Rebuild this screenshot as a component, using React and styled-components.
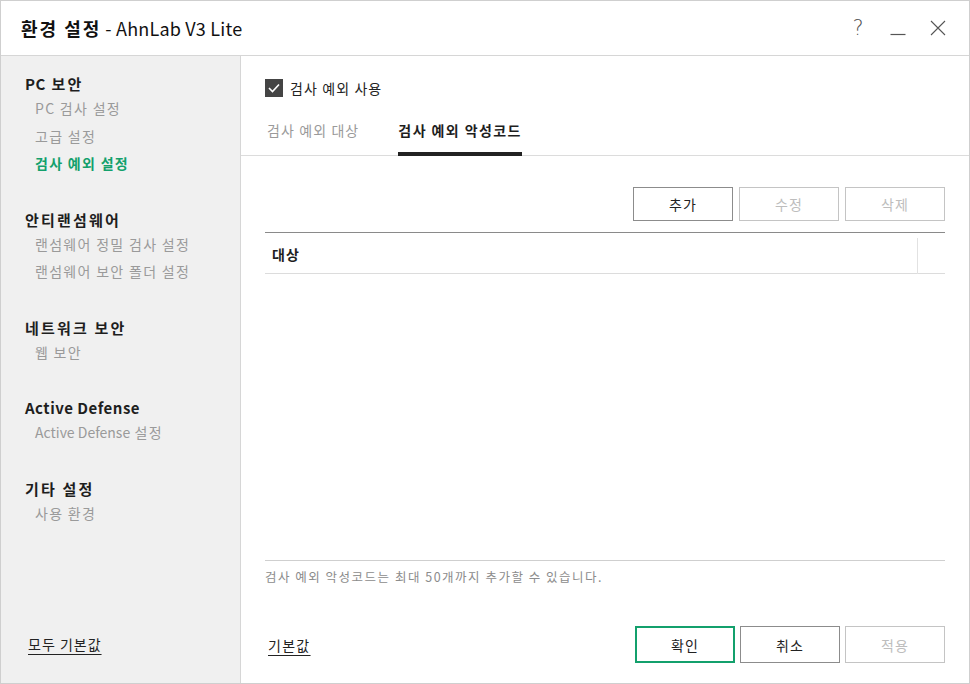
import React from "react";
import styled, { createGlobalStyle } from "styled-components";

const Global = createGlobalStyle`
  html, body { margin: 0; padding: 0; background: #fff; }
  * { box-sizing: border-box; }
  body { font-family: "Noto Sans CJK KR", "Noto Sans", sans-serif; color: #222; }
`;

const Window = styled.div`
  width: 970px;
  height: 684px;
  border: 1px solid #cfcfcf;
  display: flex;
  flex-direction: column;
  background: #fff;
`;

const TitleBar = styled.div`
  height: 55px;
  flex-shrink: 0;
  border-bottom: 1px solid #d6d6d6;
  display: flex;
  align-items: center;
  padding: 0 20px 0 20px;
`;

const Title = styled.div`
  font-size: 18px;
  line-height: 24px;
  color: #111;
  flex: 1;
  letter-spacing: 0.2px;
  b { font-weight: 700; letter-spacing: 2px; margin-right: 4px; }
`;

const WinButtons = styled.div`
  display: flex;
  align-items: center;
  gap: 22px;
  margin-right: 2px;
`;

const WinBtn = styled.span`
  width: 18px;
  height: 22px;
  display: flex;
  align-items: center;
  justify-content: center;
  color: #555;
  font-size: 21px;
  font-family: "DejaVu Sans", sans-serif;
  font-weight: 300;
`;

const Body = styled.div`
  flex: 1;
  display: flex;
  min-height: 0;
`;

const Sidebar = styled.div`
  width: 240px;
  flex-shrink: 0;
  background: #f0f0f0;
  border-right: 1px solid #d6d6d6;
  display: flex;
  flex-direction: column;
  padding: 17px 0 29px 24px;
`;

const Group = styled.div`
  display: flex;
  flex-direction: column;
  & + & { margin-top: 31px; }
`;

const GroupTitle = styled.div`
  font-size: 15px;
  font-weight: 700;
  line-height: 22px;
  color: #1e1e1e;
  letter-spacing: 2.2px;
`;

const NavItem = styled.div`
  font-size: 14px;
  line-height: 27.5px;
  padding-left: 10px;
  letter-spacing: 1.3px;
  color: ${(p) => (p.$active ? "#13a06c" : "#9a9a9a")};
  font-weight: ${(p) => (p.$active ? 700 : 400)};
`;

/* Latin words are already about as wide as the reference's */
const Lat = styled.span`
  letter-spacing: ${(p) => (p.$bold ? "0.5px" : "0")};
`;

const ResetAll = styled.span`
  margin-top: auto;
  margin-left: 3px;
  font-size: 14px;
  line-height: 20px;
  letter-spacing: 1px;
  color: #222;
  text-decoration: underline;
  text-underline-offset: 4px;
`;

const Main = styled.div`
  flex: 1;
  display: flex;
  flex-direction: column;
  padding-top: 23px;
`;

const CheckRow = styled.label`
  display: flex;
  align-items: center;
  gap: 7px;
  padding-left: 24px;
  height: 18px;
  font-size: 14px;
  letter-spacing: 1.1px;
  color: #222;
`;

const CheckBox = styled.span`
  width: 18px;
  height: 18px;
  background: #444;
  display: flex;
  align-items: center;
  justify-content: center;
`;

const Tabs = styled.div`
  margin-top: 23px;
  display: flex;
  gap: 39px;
  padding-left: 26px;
  border-bottom: 1px solid #dcdcdc;
`;

const Tab = styled.div`
  font-size: 14px;
  line-height: 20px;
  padding-bottom: 12px;
  margin-bottom: -1px;
  border-bottom: 4px solid ${(p) => (p.$active ? "#222" : "transparent")};
  color: ${(p) => (p.$active ? "#1e1e1e" : "#9a9a9a")};
  font-weight: ${(p) => (p.$active ? 700 : 400)};
  letter-spacing: ${(p) => (p.$active ? "1.4px" : "1.1px")};
`;

const Panel = styled.div`
  flex: 1;
  display: flex;
  flex-direction: column;
  padding: 31px 24px 20px 24px;
  min-height: 0;
`;

const Toolbar = styled.div`
  display: flex;
  justify-content: flex-end;
  gap: 6px;
`;

const Button = styled.button`
  width: 100px;
  height: ${(p) => (p.$tall ? "37px" : "34px")};
  background: #fff;
  font-family: inherit;
  font-size: 14px;
  letter-spacing: 1px;
  padding: 0;
  cursor: default;
  border: ${(p) =>
    p.$primary ? "2px solid #13a06c" : p.disabled ? "1px solid #c4c4c4" : "1px solid #8c8c8c"};
  color: ${(p) => (p.disabled ? "#bdbdbd" : "#222")};
`;

const Table = styled.div`
  margin-top: 11px;
  flex: 1;
  border-top: 1px solid #8a8a8a;
  border-bottom: 1px solid #cfcfcf;
  display: flex;
  flex-direction: column;
`;

const HeadRow = styled.div`
  height: 41px;
  display: grid;
  grid-template-columns: 1fr 28px;
  align-items: center;
  border-bottom: 1px solid #dcdcdc;
`;

const HeadCell = styled.div`
  height: 100%;
  display: flex;
  align-items: center;
  padding-left: 7px;
  font-size: 14px;
  font-weight: 700;
  letter-spacing: 1px;
  color: #1e1e1e;
  & + & {
    border-left: 1px solid #e2e2e2;
    height: 36px;
    margin-top: 5px;
    align-self: start;
  }
`;

const Note = styled.div`
  margin-top: 8px;
  font-size: 12.5px;
  line-height: 16px;
  letter-spacing: 1.5px;
  color: #8c8c8c;
`;

const Footer = styled.div`
  margin-top: 41px;
  display: flex;
  align-items: center;
  gap: 5px;
`;

const Link = styled.span`
  flex: 1;
  padding-left: 3px;
  font-size: 14px;
  letter-spacing: 1.3px;
  color: #222;
  text-decoration: underline;
  text-underline-offset: 4px;
`;

const nav = [
  { title: <><Lat $bold>PC</Lat> 보안</>, items: ["PC 검사 설정", "고급 설정", "검사 예외 설정"] },
  { title: "안티랜섬웨어", items: ["랜섬웨어 정밀 검사 설정", "랜섬웨어 보안 폴더 설정"] },
  { title: "네트워크 보안", items: ["웹 보안"] },
  { title: <Lat $bold>Active Defense</Lat>, items: [<><Lat>Active Defense</Lat> 설정</>] },
  { title: "기타 설정", items: ["사용 환경"] },
];

export default function App() {
  return (
    <>
      <Global />
      <Window>
        <TitleBar>
          <Title>
            <b>환경 설정</b>- AhnLab V3 Lite
          </Title>
          <WinButtons>
            <WinBtn>?</WinBtn>
            <WinBtn>
              <svg width="16" height="22" viewBox="0 0 16 22">
                <line x1="0.5" y1="17.5" x2="15.5" y2="17.5" stroke="#555" strokeWidth="1.2" />
              </svg>
            </WinBtn>
            <WinBtn>
              <svg width="16" height="16" viewBox="0 0 16 16">
                <path d="M1 1 L15 15 M15 1 L1 15" stroke="#555" strokeWidth="1.1" fill="none" />
              </svg>
            </WinBtn>
          </WinButtons>
        </TitleBar>
        <Body>
          <Sidebar>
            {nav.map((g, gi) => (
              <Group key={gi}>
                <GroupTitle>{g.title}</GroupTitle>
                {g.items.map((it, i) => (
                  <NavItem key={i} $active={it === "검사 예외 설정"}>
                    {it}
                  </NavItem>
                ))}
              </Group>
            ))}
            <ResetAll>모두 기본값</ResetAll>
          </Sidebar>
          <Main>
            <CheckRow>
              <CheckBox>
                <svg width="12" height="10" viewBox="0 0 12 10">
                  <path d="M1 5 L4.5 8.5 L11 1.5" stroke="#fff" strokeWidth="1.6" fill="none" />
                </svg>
              </CheckBox>
              검사 예외 사용
            </CheckRow>
            <Tabs>
              <Tab>검사 예외 대상</Tab>
              <Tab $active>검사 예외 악성코드</Tab>
            </Tabs>
            <Panel>
              <Toolbar>
                <Button>추가</Button>
                <Button disabled>수정</Button>
                <Button disabled>삭제</Button>
              </Toolbar>
              <Table>
                <HeadRow>
                  <HeadCell>대상</HeadCell>
                  <HeadCell />
                </HeadRow>
              </Table>
              <Note>검사 예외 악성코드는 최대 50개까지 추가할 수 있습니다.</Note>
              <Footer>
                <Link>기본값</Link>
                <Button $tall $primary>확인</Button>
                <Button $tall>취소</Button>
                <Button $tall disabled>적용</Button>
              </Footer>
            </Panel>
          </Main>
        </Body>
      </Window>
    </>
  );
}
